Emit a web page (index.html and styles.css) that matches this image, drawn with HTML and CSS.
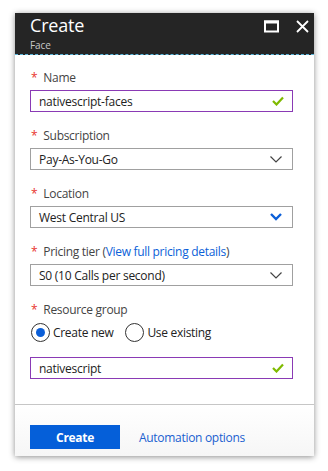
FILE: index.html
```html
<!DOCTYPE html>
<html lang="en">
<head>
    <meta charset="UTF-8">
    <meta name="viewport" content="width=device-width, initial-scale=1.0">
    <title>Create - Face</title>
    <link rel="stylesheet" href="styles.css">
</head>
<body>
    <div class="blade">
        <div class="blade-header">
            <div class="titles">
                <div class="title">Create</div>
                <div class="subtitle">Face</div>
            </div>
            <div class="actions">
                <svg class="icon" width="15" height="13" viewBox="0 0 15 13">
                    <rect x="1" y="1.5" width="13" height="10" fill="none" stroke="#fff" stroke-width="2"/>
                    <rect x="0" y="0.5" width="15" height="3" fill="#fff"/>
                </svg>
                <svg class="icon" width="13" height="13" viewBox="0 0 13 13">
                    <path d="M1 1 L12 12 M12 1 L1 12" stroke="#fff" stroke-width="1.8" fill="none"/>
                </svg>
            </div>
        </div>

        <div class="blade-content">
            <div class="form-group">
                <label><span class="req">*</span>Name</label>
                <div class="field valid">
                    <span>nativescript-faces</span>
                    <svg width="12" height="10" viewBox="0 0 12 10"><path d="M1 5 L4.5 8.5 L11 1.5" stroke="#7fba00" stroke-width="2.2" fill="none"/></svg>
                </div>
            </div>
            <div class="form-group">
                <label><span class="req">*</span>Subscription</label>
                <div class="field">
                    <span>Pay-As-You-Go</span>
                    <svg width="12" height="7" viewBox="0 0 12 7"><path d="M0.5 0.5 L6 6 L11.5 0.5" stroke="#444" stroke-width="1.2" fill="none"/></svg>
                </div>
            </div>
            <div class="form-group">
                <label><span class="req">*</span>Location</label>
                <div class="field">
                    <span>West Central US</span>
                    <svg width="12" height="8" viewBox="0 0 12 8"><path d="M1 1 L6 6 L11 1" stroke="#0b5fd8" stroke-width="2.4" fill="none"/></svg>
                </div>
            </div>
            <div class="form-group">
                <label><span class="req">*</span>Pricing tier (<a href="#">View full pricing details</a>)</label>
                <div class="field">
                    <span>S0 (10 Calls per second)</span>
                    <svg width="12" height="7" viewBox="0 0 12 7"><path d="M0.5 0.5 L6 6 L11.5 0.5" stroke="#444" stroke-width="1.2" fill="none"/></svg>
                </div>
            </div>
            <div class="form-group last">
                <label><span class="req">*</span>Resource group</label>
                <div class="radios">
                    <span class="radio checked"></span><span class="radio-label">Create new</span>
                    <span class="radio"></span><span class="radio-label">Use existing</span>
                </div>
                <div class="field valid">
                    <span>nativescript</span>
                    <svg width="12" height="10" viewBox="0 0 12 10"><path d="M1 5 L4.5 8.5 L11 1.5" stroke="#7fba00" stroke-width="2.2" fill="none"/></svg>
                </div>
            </div>
        </div>

        <div class="blade-footer">
            <button class="btn-primary">Create</button>
            <a href="#" class="footer-link">Automation options</a>
        </div>
    </div>
</body>
</html>
```

FILE: styles.css
```css
body {
    margin: 0;
    padding: 13px 14px 16px 15px;
    background-color: #fff;
    font-family: "Open Sans", sans-serif;
    color: #333;
}

.blade {
    width: 299px;
    background-color: #fff;
    box-shadow: 0 1px 6px rgba(0, 0, 0, 0.45);
}

.blade-header {
    background-color: #252525;
    height: 41px;
    border-bottom: 1px dashed #59b4d9;
    display: flex;
    justify-content: space-between;
    padding: 0 5px 0 15px;
}

.title {
    color: #fff;
    font-size: 18px;
    line-height: 24px;
    letter-spacing: -0.2px;
}

.subtitle {
    color: #c8c8c8;
    font-size: 10px;
    line-height: 14px;
    margin-top: 1px;
    letter-spacing: -0.1px;
}

.actions {
    display: flex;
    gap: 17px;
    padding-top: 7px;
}

.blade-content {
    padding: 15px 0 25px 15px;
    border-bottom: 1px solid #c6c6c6;
}

.form-group {
    margin-bottom: 16px;
}

.form-group.last {
    margin-bottom: 0;
}

.form-group label {
    display: block;
    font-size: 12px;
    line-height: 16px;
    margin-bottom: 4px;
    color: #444;
    letter-spacing: -0.3px;
}

.req {
    color: #e8332c;
    margin: 0 6px 0 1px;
}

.form-group label a {
    color: #0b5fd8;
    text-decoration: none;
}

.field {
    box-sizing: border-box;
    width: 263px;
    height: 22px;
    border: 1px solid #a0a0a0;
    display: flex;
    align-items: center;
    justify-content: space-between;
    padding: 0 10px 0 8px;
    font-size: 12px;
    color: #222;
    letter-spacing: -0.25px;
}

.field.valid {
    border-color: #8a3ab5;
    padding-right: 8px;
}

.radios {
    display: flex;
    align-items: center;
    height: 20px;
    margin: 3px 0 15px;
    font-size: 12px;
    color: #222;
    letter-spacing: -0.3px;
}

.radio {
    box-sizing: border-box;
    width: 19px;
    height: 19px;
    border: 1px solid #333;
    border-radius: 50%;
    display: flex;
    align-items: center;
    justify-content: center;
    margin-left: 1px;
}

.radio.checked::after {
    content: "";
    width: 9px;
    height: 9px;
    border-radius: 50%;
    background-color: #0b5fd8;
}

.radio-label {
    margin: 0 11px 0 3px;
}

.blade-footer {
    padding: 20px 15px 7px;
    display: flex;
    align-items: center;
    gap: 19px;
    background: linear-gradient(#fff, #f6f6f6);
}

.btn-primary {
    width: 90px;
    height: 24px;
    border: none;
    background-color: #055fd9;
    color: #fff;
    font-family: "Open Sans", sans-serif;
    font-weight: bold;
    font-size: 12px;
    letter-spacing: -0.3px;
    cursor: pointer;
}

.footer-link {
    color: #1a5fd0;
    font-size: 12px;
    letter-spacing: -0.3px;
    text-decoration: none;
}
```
